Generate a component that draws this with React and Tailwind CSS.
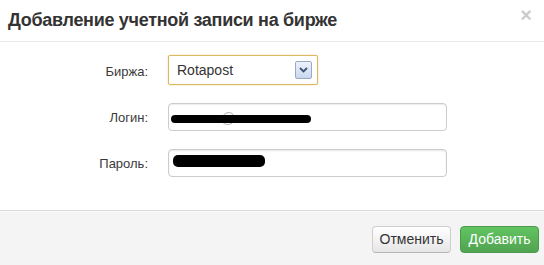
import React from "react";

export default function App() {
  return (
    <div
      className="w-[544px] h-[265px] bg-white flex flex-col overflow-hidden"
      style={{ fontFamily: '"Liberation Sans", Arial, sans-serif' }}
    >
      {/* Header */}
      <div className="h-[42px] shrink-0 border-b border-[#e8e8e8] flex items-center justify-between pl-[8px] pr-[12px]">
        <h3 className="text-[18px] tracking-[-0.3px] font-bold text-[#333] leading-none mt-[-2px]">
          Добавление учетной записи на бирже
        </h3>
        <span className="text-[20px] font-bold leading-none text-black opacity-20 mt-[-12px]">×</span>
      </div>

      {/* Body */}
      <div className="h-[168px] shrink-0 pt-[13px] flex flex-col gap-[18px]">
        <div className="flex items-center">
          <label className="w-[148px] text-right text-[13px] text-[#3a3a3a] pt-[3px]">Биржа:</label>
          <div className="ml-[20px] w-[150px] h-[30px] border border-[#dcb960] rounded-[2px] shadow-[0_0_2px_rgba(230,190,90,0.6)] flex items-center justify-between pl-[8px] pr-[5px] bg-white">
            <span className="text-[14px] text-[#333]">Rotapost</span>
            <span className="w-[17px] h-[18px] border border-[#98aac6] rounded-[2px] bg-gradient-to-b from-[#eef3fc] to-[#c9d7ee] flex items-center justify-center">
              <svg width="9" height="6" viewBox="0 0 9 6">
                <path d="M1 1 L4.5 4.5 L8 1" fill="none" stroke="#3e5275" strokeWidth="1.8" />
              </svg>
            </span>
          </div>
        </div>

        <div className="flex items-center">
          <label className="w-[148px] text-right text-[13px] text-[#3a3a3a] pt-[2px]">Логин:</label>
          <div className="ml-[20px] w-[279px] h-[28px] border border-[#cccccc] rounded-[4px] shadow-[inset_0_1px_1px_rgba(0,0,0,0.075)] bg-white relative">
            <span className="absolute left-[52px] top-[4px] text-[14px] text-[#bbb]">@</span>
            <div className="absolute left-[2px] top-[11px] w-[140px] h-[8px] bg-black rounded-full" />
          </div>
        </div>

        <div className="flex items-center">
          <label className="w-[148px] text-right text-[13px] text-[#3a3a3a] pt-[1px]">Пароль:</label>
          <div className="ml-[20px] w-[279px] h-[28px] border border-[#cccccc] rounded-[4px] shadow-[inset_0_1px_2px_rgba(0,0,0,0.1)] bg-white relative">
            <div className="absolute left-[4px] top-[5px] w-[92px] h-[12px] bg-black rounded-[5px]" />
          </div>
        </div>
      </div>

      {/* Footer */}
      <div className="flex-1 border-t border-[#dadada] bg-[#f4f4f4] shadow-[inset_0_1px_0_#fbfbfb] flex justify-end items-start pt-[15px] pr-[5px] gap-[9px]">
        <button className="w-[79px] h-[27px] rounded-[4px] border border-[#cfcfcf] border-b-[#b5b5b5] bg-gradient-to-b from-white to-[#e6e6e6] text-[14px] text-[#333] flex items-center justify-center">
          Отменить
        </button>
        <button className="w-[79px] h-[27px] rounded-[4px] border border-[#4a9a4a] bg-gradient-to-b from-[#62c462] to-[#51a351] text-[14px] text-white flex items-center justify-center">
          Добавить
        </button>
      </div>
    </div>
  );
}
